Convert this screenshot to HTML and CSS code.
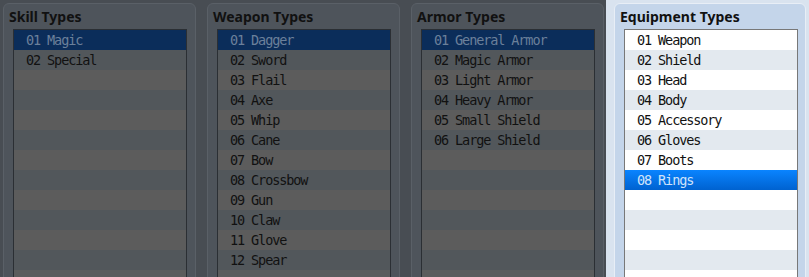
FILE: index.html
```html
<!DOCTYPE html>
<html lang="en">
<head>
  <meta charset="UTF-8">
  <title>Types</title>
  <link rel="stylesheet" href="styles.css">
</head>
<body>
  <div class="zona zona-oscura">
    <div class="panel">
      <div class="titulo">Skill Types</div>
      <ul class="lista">
        <li class="sel">01 Magic</li>
        <li>02 Special</li>
        <li></li><li></li><li></li><li></li><li></li>
        <li></li><li></li><li></li><li></li><li></li><li></li>
      </ul>
    </div>
    <div class="panel">
      <div class="titulo">Weapon Types</div>
      <ul class="lista">
        <li class="sel">01 Dagger</li>
        <li>02 Sword</li>
        <li>03 Flail</li>
        <li>04 Axe</li>
        <li>05 Whip</li>
        <li>06 Cane</li>
        <li>07 Bow</li>
        <li>08 Crossbow</li>
        <li>09 Gun</li>
        <li>10 Claw</li>
        <li>11 Glove</li>
        <li>12 Spear</li>
        <li></li>
      </ul>
    </div>
    <div class="panel">
      <div class="titulo">Armor Types</div>
      <ul class="lista">
        <li class="sel">01 General Armor</li>
        <li>02 Magic Armor</li>
        <li>03 Light Armor</li>
        <li>04 Heavy Armor</li>
        <li>05 Small Shield</li>
        <li>06 Large Shield</li>
        <li></li><li></li><li></li><li></li><li></li><li></li><li></li>
      </ul>
    </div>
  </div>
  <div class="zona zona-activa">
    <div class="panel">
      <div class="titulo">Equipment Types</div>
      <ul class="lista">
        <li>01 Weapon</li>
        <li>02 Shield</li>
        <li>03 Head</li>
        <li>04 Body</li>
        <li>05 Accessory</li>
        <li>06 Gloves</li>
        <li>07 Boots</li>
        <li class="sel">08 Rings</li>
        <li></li><li></li><li></li><li></li><li></li>
      </ul>
    </div>
  </div>
</body>
</html>
```

FILE: styles.css
```css
body {
  margin: 0;
  height: 277px;
  overflow: hidden;
  display: flex;
  font-family: 'Noto Sans', sans-serif;
}
.zona {
  display: flex;
  gap: 11px;
  padding: 3px 0 0 3px;
}
.zona-oscura {
  width: 603px;
  background: #484d53;
}
.zona-activa {
  flex: 1;
  background: #d9e3ef;
  padding-left: 8px;
  padding-right: 3px;
}
.panel {
  width: 191px;
  height: 300px;
  border: 1px solid #5a6067;
  border-radius: 6px;
  background: #4e545b;
}
.zona-activa .panel {
  width: 190px;
  border-color: #e8eef6;
  background: #c4d5ea;
}
.titulo {
  height: 25px;
  line-height: 25px;
  padding-left: 5px;
  font-size: 14px;
  font-weight: bold;
  color: #111;
}
.lista {
  list-style: none;
  margin: 0 0 0 9px;
  padding: 0;
  width: 172px;
  border: 1px solid #2b2f34;
  font-family: 'DejaVu Sans Mono', monospace;
  font-size: 13.5px;
  letter-spacing: -1.1px;
  color: #111;
}
.lista li {
  height: 20px;
  line-height: 21px;
  padding-left: 12px;
  background: #5c5c5c;
}
.lista li:nth-child(even) {
  background: #52575b;
}
.lista li.sel {
  background: #0b2d5a;
  color: #6b809a;
}
.zona-activa .lista {
  border-color: #787878;
}
.zona-activa .lista li {
  background: #fff;
}
.zona-activa .lista li:nth-child(even) {
  background: #e3e9ef;
}
.zona-activa .lista li.sel {
  background: linear-gradient(#0a84ff, #0062d0);
  color: #cfe3fb;
}
```
